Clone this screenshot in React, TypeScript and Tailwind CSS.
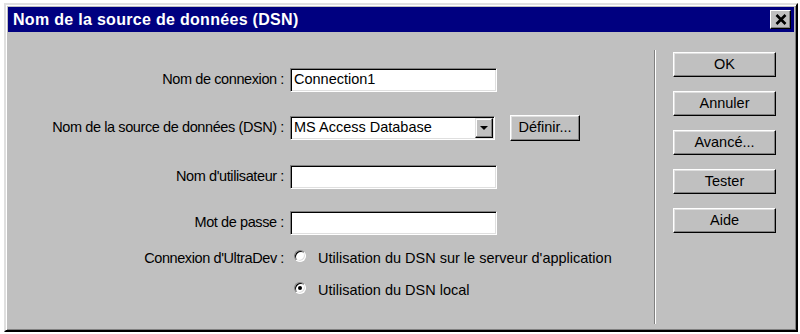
import React from 'react'

const font = { fontFamily: '"Liberation Sans", Arial, sans-serif' }

function Field({ value, width = 'w-[207px]' }: { value?: string; width?: string }) {
  return (
    <div
      className={`${width} h-[24px] bg-white border border-t-[#808080] border-l-[#808080] border-b-white border-r-white shadow-[inset_1px_1px_0_#000,inset_-1px_-1px_0_#dfdfdf] flex items-center pl-[3px] text-[14.5px] text-black`}
    >
      {value}
    </div>
  )
}

function Btn({ label, className = '' }: { label: string; className?: string }) {
  return (
    <div
      className={`bg-[#c0c0c0] border border-t-white border-l-white border-b-black border-r-black shadow-[inset_-1px_-1px_0_#808080,inset_1px_1px_0_#dfdfdf] flex items-center justify-center text-[14.5px] text-black ${className}`}
    >
      {label}
    </div>
  )
}

function Radio({ checked }: { checked?: boolean }) {
  return (
    <div className="w-[12px] h-[12px] rounded-full bg-white border border-t-[#808080] border-l-[#808080] border-b-white border-r-white shadow-[inset_1px_1px_0_#000,inset_-1px_-1px_0_#dfdfdf] flex items-center justify-center">
      {checked && <div className="w-[4px] h-[4px] rounded-full bg-black" />}
    </div>
  )
}

function Row({ label, children, className = '' }: { label: string; children: React.ReactNode; className?: string }) {
  return (
    <div className={`flex items-center ${className}`}>
      <div className="w-[277px] text-right text-[14.5px] text-black pr-[1px] tracking-[-0.4px]">{label}</div>
      <div className="ml-[5px] flex items-center">{children}</div>
    </div>
  )
}

export default function App() {
  return (
    <div className="w-[800px] h-[334px] bg-white overflow-hidden" style={font}>
      <div className="ml-[4px] mt-[3px] w-[794px] h-[329px] bg-[#c0c0c0] border-2 border-t-[#dfdfdf] border-l-[#dfdfdf] border-b-black border-r-black shadow-[inset_1px_1px_0_#fff,inset_-1px_-1px_0_#808080] p-[2px] flex flex-col">
        {/* title bar */}
        <div className="h-[25px] bg-[#000080] flex items-center justify-between pl-[5px] pr-[3px]">
          <span className="text-white font-bold text-[16px] tracking-[0.3px]">Nom de la source de données (DSN)</span>
          <div className="w-[21px] h-[19px] bg-[#c0c0c0] border border-t-white border-l-white border-b-black border-r-black shadow-[inset_-1px_-1px_0_#808080] flex items-center justify-center">
            <svg width="12" height="11" viewBox="0 0 12 11">
              <path d="M1.5 1 L10.5 10 M10.5 1 L1.5 10" stroke="#000" strokeWidth="2.6" />
            </svg>
          </div>
        </div>

        {/* body */}
        <div className="flex flex-1">
          <div className="w-[646px] flex flex-col pt-[36px]">
            <Row label="Nom de connexion :">
              <Field value="Connection1" />
            </Row>
            <Row label="Nom de la source de données (DSN) :" className="mt-[23px]">
              <div className="relative">
                <Field value="MS Access Database" width="w-[205px]" />
                <div className="absolute right-[2px] top-[2px] w-[18px] h-[20px] bg-[#c0c0c0] border border-t-[#dfdfdf] border-l-[#dfdfdf] border-b-black border-r-black shadow-[inset_-1px_-1px_0_#808080,inset_1px_1px_0_#fff] flex items-center justify-center">
                  <svg width="8" height="4" viewBox="0 0 8 4">
                    <path d="M0 0 H8 L4 4 Z" fill="#000" />
                  </svg>
                </div>
              </div>
              <Btn label="Définir..." className="ml-[15px] w-[70px] h-[26px]" />
            </Row>
            <Row label="Nom d'utilisateur :" className="mt-[24px]">
              <Field />
            </Row>
            <Row label="Mot de passe :" className="mt-[22px]">
              <Field />
            </Row>
            <Row label="Connexion d'UltraDev :" className="mt-[13px]">
              <div className="flex items-center h-[20px] pl-[4px]">
                <div className="-mt-[6px]">
                  <Radio />
                </div>
                <span className="ml-[12px] text-[14.5px] text-black">Utilisation du DSN sur le serveur d'application</span>
              </div>
            </Row>
            <div className="flex items-center h-[20px] mt-[11px] pl-[286px]">
              <div className="-mt-[6px]">
                <Radio checked />
              </div>
              <span className="ml-[12px] text-[14.5px] text-black">Utilisation du DSN local</span>
            </div>
          </div>

          {/* separator */}
          <div className="mt-[18px] mb-[4px] w-[2px] border-l border-l-[#808080] border-r border-r-white" />

          {/* buttons */}
          <div className="flex flex-col gap-[14px] pt-[20px] pl-[17px]">
            <Btn label="OK" className="w-[103px] h-[25px]" />
            <Btn label="Annuler" className="w-[103px] h-[25px]" />
            <Btn label="Avancé..." className="w-[103px] h-[25px]" />
            <Btn label="Tester" className="w-[103px] h-[25px]" />
            <Btn label="Aide" className="w-[103px] h-[25px]" />
          </div>
        </div>
      </div>
    </div>
  )
}
